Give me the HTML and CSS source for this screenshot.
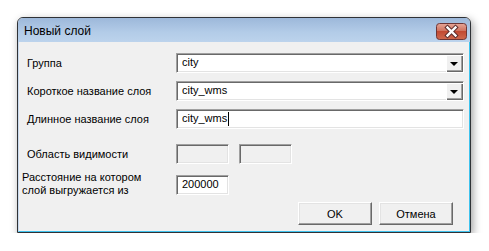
FILE: index.html
```html
<!DOCTYPE html>
<html lang="ru">
<head>
    <meta charset="UTF-8">
    <meta name="viewport" content="width=device-width, initial-scale=1.0">
    <title>Новый слой</title>
    <link rel="stylesheet" href="styles.css">
</head>
<body>

    <div class="dialog">
        <div class="titlebar">
            <span class="title">Новый слой</span>
            <button class="close-btn" aria-label="Закрыть">
                <svg width="31" height="17" viewBox="0 0 31 17">
                    <defs>
                        <linearGradient id="closeGrad" x1="0" y1="0" x2="0" y2="1">
                            <stop offset="0" stop-color="#e6a799"/>
                            <stop offset="0.45" stop-color="#d0735f"/>
                            <stop offset="0.5" stop-color="#c24a33"/>
                            <stop offset="1" stop-color="#cf6a4f"/>
                        </linearGradient>
                    </defs>
                    <rect x="0.5" y="0.5" width="30" height="16" rx="3" fill="url(#closeGrad)" stroke="#6e3636"/>
                    <path d="M11.5 4.5 L19.5 12.5 M19.5 4.5 L11.5 12.5" stroke="#5b2c2c" stroke-width="4.4" stroke-linecap="square"/>
                    <path d="M11.5 4.5 L19.5 12.5 M19.5 4.5 L11.5 12.5" stroke="#fff" stroke-width="2.4" stroke-linecap="square"/>
                </svg>
            </button>
        </div>

        <div class="client">
            <div class="row">
                <span class="label">Группа</span>
                <div class="field combo">
                    <span class="value">city</span>
                    <span class="drop"><span class="arrow"></span></span>
                </div>
            </div>
            <div class="row">
                <span class="label">Короткое название слоя</span>
                <div class="field combo">
                    <span class="value">city_wms</span>
                    <span class="drop"><span class="arrow"></span></span>
                </div>
            </div>
            <div class="row">
                <span class="label">Длинное название слоя</span>
                <div class="field">
                    <span class="value">city_wms</span><span class="caret"></span>
                </div>
            </div>
            <div class="row row-gap">
                <span class="label">Область видимости</span>
                <div class="pair">
                    <div class="field small disabled"></div>
                    <div class="field small disabled"></div>
                </div>
            </div>
            <div class="row row-dist">
                <span class="label label-multi">Расстояние на котором<br>слой выгружается из</span>
                <div class="field small">
                    <span class="value">200000</span>
                </div>
            </div>
            <div class="buttons">
                <button class="btn">OK</button>
                <button class="btn">Отмена</button>
            </div>
        </div>
    </div>

</body>
</html>
```

FILE: styles.css
```css
/* --- Global Setup --- */
html, body {
    margin: 0;
    padding: 0;
    background: #fff;
    font-family: 'Liberation Sans', Arial, sans-serif;
    font-size: 11px;
    color: #000;
}

body {
    padding: 17px 0 0 17px;
}

/* --- Window frame --- */
.dialog {
    width: 454px;
    height: 216px;
    box-sizing: border-box;
    border: 1px solid #2f3236;
    border-radius: 6px 6px 0 0;
    background: #f0f0f0;
    display: flex;
    flex-direction: column;
    box-shadow: 2px 3px 9px rgba(0, 0, 0, 0.38);
}

.titlebar {
    height: 24px;
    display: flex;
    align-items: center;
    justify-content: space-between;
    padding: 0 3px 0 6px;
    border-radius: 5px 5px 0 0;
    background: linear-gradient(to bottom, #9db8da, #b3cce8 60%, #bcd3ec);
}

.title {
    font-size: 12px;
    padding-top: 2px;
}

.close-btn {
    border: 0;
    padding: 0;
    margin: 0;
    background: none;
    width: 31px;
    height: 17px;
    margin-top: 3px;
    display: block;
}
.close-btn svg { display: block; }

.client {
    flex: 1;
    padding: 11px 15px 0 8px;
    border-left: 1px solid #c9daee;
    border-right: 1px solid #3fc3ee;
    border-bottom: 1px solid #3fc3ee;
}

/* --- Form rows --- */
.row {
    display: grid;
    grid-template-columns: 149px 288px;
    height: 20px;
    margin-bottom: 8px;
}
.row-gap { margin-top: 15px; margin-bottom: 11px; }
.row-dist { margin-bottom: 7px; }

.label {
    padding-top: 4px;
    line-height: 13px;
    white-space: nowrap;
}
.label-multi {
    margin-left: -5px;
    padding-top: 0;
    margin-top: -4px;
}

.field {
    position: relative;
    box-sizing: border-box;
    height: 20px;
    background: #fff;
    border-top: 1px solid #a0a0a0;
    border-left: 1px solid #a0a0a0;
    border-bottom: 1px solid #fff;
    border-right: 1px solid #fff;
    box-shadow: inset 1px 1px 0 #696969, inset -1px -1px 0 #e3e3e3;
    display: flex;
    align-items: center;
    padding-left: 5px;
}
.field .value { line-height: 13px; margin-top: -2px; }

.caret {
    display: inline-block;
    width: 1px;
    height: 14px;
    background: #000;
    margin-left: 1px;
}

.field.small { width: 53px; }
.field.disabled { background: #f0f0f0; }

.pair { display: flex; gap: 10px; }

/* Combo dropdown button */
.drop {
    position: absolute;
    top: 1px;
    right: 0;
    width: 17px;
    height: 17px;
    background: #f0f0f0;
    box-shadow: inset 1px 1px 0 #fff, inset -1px -1px 0 #696969, inset -2px -2px 0 #a0a0a0;
    display: flex;
    align-items: center;
    justify-content: center;
}
.arrow {
    width: 0;
    height: 0;
    border-left: 4px solid transparent;
    border-right: 4px solid transparent;
    border-top: 4px solid #000;
    margin: 1px 0 0 -1px;
}

/* --- Buttons --- */
.buttons {
    display: flex;
    justify-content: flex-end;
    gap: 7px;
    padding-right: 1px;
}
.btn {
    width: 74px;
    height: 23px;
    padding: 0;
    font-family: inherit;
    font-size: 11px;
    color: #000;
    background: #f0f0f0;
    border-top: 1px solid #fff;
    border-left: 1px solid #fff;
    border-bottom: 1px solid #696969;
    border-right: 1px solid #696969;
    box-shadow: inset -1px -1px 0 #a0a0a0, inset 1px 1px 0 #e3e3e3;
}
```
